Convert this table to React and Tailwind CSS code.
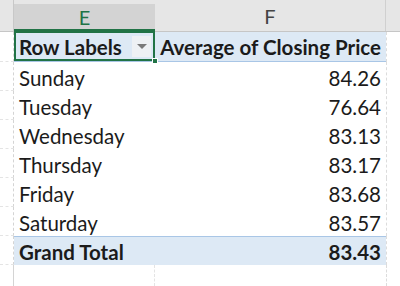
const rows = [
  ["Sunday", "84.26"],
  ["Tuesday", "76.64"],
  ["Wednesday", "83.13"],
  ["Thursday", "83.17"],
  ["Friday", "83.68"],
  ["Saturday", "83.57"],
]

const font = { fontFamily: "Lato, 'Liberation Sans', sans-serif" }

function Gutter({ dotted = true }) {
  return (
    <div className={`w-[14px] shrink-0 border-r border-[#d4d4d4] ${dotted ? "border-b border-b-[#e4e4e4] border-dashed" : ""}`} />
  )
}

export default function App() {
  return (
    <div className="w-[400px] h-[286px] bg-white overflow-hidden text-[#1b1b1b] text-[20.5px] leading-none" style={font}>
      {/* column headers */}
      <div className="flex h-[32px] bg-[#e6e6e6] border-b border-[#c6c6c6]">
        <div className="w-[14px] shrink-0 border-r border-[#c8c8c8]" />
        <div className="w-[141px] shrink-0 mt-[4px] bg-[#d3d3d3] border-b-2 border-[#217346] flex items-center justify-center text-[#217346] text-[20px]">
          E
        </div>
        <div className="w-[231px] shrink-0 flex items-center justify-center text-[#444] text-[20px] border-r border-[#d0d0d0]">
          F
        </div>
        <div className="flex-1" />
      </div>

      {/* pivot header */}
      <div className="flex h-[30px]">
        <Gutter />
        <div className="relative w-[141px] shrink-0 bg-[#dde9f5] border-b border-[#a9c6e6] flex items-center pl-[5px] pt-[2px] font-bold">
          Row Labels
          <div className="absolute right-[4px] top-[4px] w-[19px] h-[21px] bg-[#eef1f4] flex items-center justify-center">
            <div className="w-0 h-0 border-l-[5px] border-r-[5px] border-t-[5px] border-l-transparent border-r-transparent border-t-[#7a7a7a]" />
          </div>
          <div className="absolute inset-0 border-2 border-[#217346] -top-px" />
          <div className="absolute -right-[3px] -bottom-[3px] w-[6px] h-[6px] bg-[#217346] border border-white" />
        </div>
        <div className="w-[231px] shrink-0 bg-[#dde9f5] border-b border-[#a9c6e6] flex items-center justify-end pr-[5px] pt-[2px] font-bold">
          Average of Closing Price
        </div>
        <div className="flex-1 border-l border-dashed border-[#dcdcdc]" />
      </div>

      {rows.map(([day, val]) => (
        <div key={day} className="flex h-[29px]">
          <Gutter />
          <div className="w-[141px] shrink-0 flex items-center pl-[5px] pt-[4px]">{day}</div>
          <div className="w-[231px] shrink-0 flex items-center justify-end pr-[5px] pt-[4px]">{val}</div>
          <div className="flex-1 border-l border-dashed border-[#dcdcdc]" />
        </div>
      ))}

      {/* grand total */}
      <div className="flex h-[29px]">
        <Gutter />
        <div className="w-[372px] shrink-0 flex bg-[#dde9f5] border-t border-[#a9c6e6] font-bold">
          <div className="w-[141px] shrink-0 flex items-center pl-[5px] pt-[3px]">Grand Total</div>
          <div className="flex-1 flex items-center justify-end pr-[5px] pt-[3px]">83.43</div>
        </div>
        <div className="flex-1 border-l border-dashed border-[#dcdcdc]" />
      </div>

      <div className="flex h-[21px]">
        <Gutter dotted={false} />
        <div className="w-[141px] shrink-0 border-r border-dashed border-[#e4e4e4]" />
        <div className="w-[231px] shrink-0" />
        <div className="flex-1 border-l border-dashed border-[#dcdcdc]" />
      </div>
    </div>
  )
}
